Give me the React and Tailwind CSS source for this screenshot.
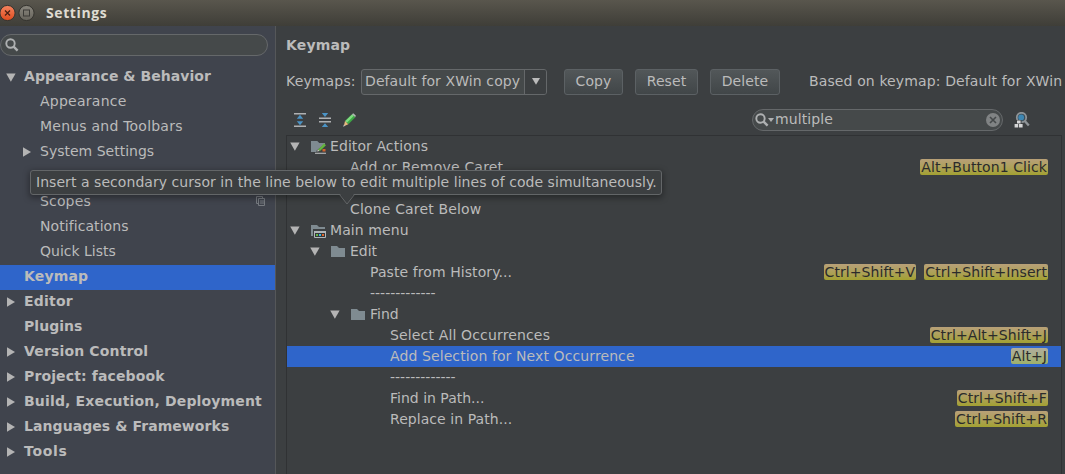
const Tri = ({ open }) =>
  open ? (
    <svg width="10" height="9" className="shrink-0" viewBox="0 0 10 9"><path d="M0.2 0.5h9.4L4.9 8.8z" fill="#b4b4b4" /></svg>
  ) : (
    <svg width="8" height="10" className="shrink-0" viewBox="0 0 8 10"><path d="M0 0.3v9.4L8 5z" fill="#b4b4b4" /></svg>
  );

const Magnifier = () => (
  <svg width="14" height="14" viewBox="0 0 14 14" className="shrink-0" fill="none" stroke="#aeb0b1">
    <circle cx="5.5" cy="5.5" r="4.2" strokeWidth="1.9" />
    <path d="M8.6 8.6l4 4" strokeWidth="2.4" />
  </svg>
);

const Folder = ({ kind }) => (
  <svg width="16" height="16" viewBox="0 0 16 16" className="shrink-0">
    <path d="M1 3h6l2 2h6v9H1z" fill="#7f8b91" />
    {kind === "edit" && (
      <g>
        <path d="M5 14l8-10h3v12H5z" fill="#3c3f41" />
        <path d="M1 14V3h6l2 2h6v1L6.5 12.5V14z" fill="#7f8b91" />
        <path d="M5 15.3h11" stroke="#afb1b3" strokeWidth="1.2" />
        <path d="M8 11.8L14 5.4 16 7.2 10 13z" fill="#62b53c" />
        <path d="M7 13.6l1-2 1.5 1.5z" fill="#d3d4c8" />
        <path d="M12.5 11h3v2.5h-3z" fill="#d0632c" />
      </g>
    )}
    {kind === "menu" && (
      <g>
        <path d="M3 7h13v9H3z" fill="#3c3f41" />
        <path d="M4.5 9.5h11v6h-11z" fill="#34373a" stroke="#afb5b9" />
        <path d="M4 9h12v2H4z" fill="#afb5b9" />
        <path d="M6 12h2v2H6z" fill="#62b543" />
        <path d="M9 12h2v2H9z" fill="#40b6e0" />
        <path d="M12 12h2v2h-2z" fill="#e0662c" />
      </g>
    )}
  </svg>
);

const nav = [
  { t: "Appearance & Behavior", top: true, open: true, track: "tracking-[0.05px]" },
  { t: "Appearance", track: "tracking-[0.25px]" },
  { t: "Menus and Toolbars", track: "tracking-[0.22px]" },
  { t: "System Settings", arrow: true },
  { t: "" },
  { t: "Scopes", copy: true, track: "tracking-[0.15px]" },
  { t: "Notifications", track: "tracking-[0.07px]" },
  { t: "Quick Lists" },
  { t: "Keymap", top: true, sel: true, track: "tracking-[0.15px]" },
  { t: "Editor", top: true, arrow: true, track: "tracking-[0.2px]" },
  { t: "Plugins", top: true, track: "tracking-[0.05px]" },
  { t: "Version Control", top: true, arrow: true, track: "tracking-[0.16px]" },
  { t: "Project: facebook", top: true, arrow: true, track: "tracking-[0.13px]" },
  { t: "Build, Execution, Deployment", top: true, arrow: true, track: "tracking-[0.16px]" },
  { t: "Languages & Frameworks", top: true, arrow: true, track: "tracking-[0.07px]" },
  { t: "Tools", top: true, arrow: true, track: "tracking-[0.7px]" },
];

const rows = [
  { t: "Editor Actions", pad: "pl-[3px]", folder: "edit", track: "tracking-[0.08px]" },
  { t: "Add or Remove Caret", pad: "pl-[63px]", keys: ["Alt+Button1 Click"], track: "tracking-[0.2px]" },
  { t: "", pad: "pl-[63px]" },
  { t: "Clone Caret Below", pad: "pl-[63px]", track: "tracking-[0.16px]" },
  { t: "Main menu", pad: "pl-[3px]", folder: "menu", track: "tracking-[0.1px]" },
  { t: "Edit", pad: "pl-[23px]", folder: "plain" },
  { t: "Paste from History...", pad: "pl-[83px]", keys: ["Ctrl+Shift+V", "Ctrl+Shift+Insert"], track: "tracking-[0.08px]" },
  { t: "-------------", pad: "pl-[83px]" },
  { t: "Find", pad: "pl-[43px]", folder: "plain" },
  { t: "Select All Occurrences", pad: "pl-[103px]", keys: ["Ctrl+Alt+Shift+J"], track: "tracking-[0.15px]" },
  { t: "Add Selection for Next Occurrence", pad: "pl-[103px]", keys: ["Alt+J"], sel: true, track: "tracking-[0.1px]" },
  { t: "-------------", pad: "pl-[103px]" },
  { t: "Find in Path...", pad: "pl-[103px]", keys: ["Ctrl+Shift+F"] },
  { t: "Replace in Path...", pad: "pl-[103px]", keys: ["Ctrl+Shift+R"], track: "tracking-[0.06px]" },
];

function TitleBar() {
  return (
    <header className="flex h-[26px] shrink-0 items-center bg-linear-to-b from-[#59564d] to-[#3f3e38] pb-px">
      <svg width="36" height="18" viewBox="0 0 36 18" className="shrink-0">
        <defs>
          <linearGradient id="close" x2="0" y2="1"><stop stopColor="#f58560" /><stop offset="1" stopColor="#df4b1d" /></linearGradient>
          <linearGradient id="max" x2="0" y2="1"><stop stopColor="#8a877e" /><stop offset="1" stopColor="#66635b" /></linearGradient>
        </defs>
        <circle cx="7.5" cy="9" r="7.6" fill="url(#close)" stroke="#34332e" />
        <path d="M5 6.5l5 5M10 6.5l-5 5" stroke="#4b2013" strokeWidth="1.3" />
        <circle cx="26.5" cy="9" r="7.6" fill="url(#max)" stroke="#34332e" />
        <rect x="23.5" y="6" width="6" height="6" fill="none" stroke="#3c3b37" />
      </svg>
      <h1 className="ml-[10px] font-['Open_Sans',sans-serif] text-[14px] font-bold tracking-[0.6px] text-[#dfdbd2]">Settings</h1>
    </header>
  );
}

function Sidebar() {
  return (
    <aside className="flex w-[276px] shrink-0 flex-col border-r border-[#555759] bg-[#40444d] pt-2">
      <div className="mb-[9px] flex h-[22px] w-[268px] shrink-0 items-center rounded-full border border-[#65686a] bg-[#45494a] pl-1">
        <Magnifier />
      </div>
      <nav>
        {nav.map((n, i) => (
          <div key={i} className={`flex h-[25px] items-center pb-[3px] ${n.top ? "pl-[6px] font-bold" : "pl-[22px]"} ${n.sel ? "bg-[#2f65ca]" : ""}`}>
            <span className={`flex w-[18px] shrink-0 pt-[2px] ${n.open ? "" : "pl-px"}`}>{(n.open || n.arrow) && <Tri open={n.open} />}</span>
            <span className={`grow ${n.track ?? ""}`}>{n.t}</span>
            {n.copy && (
              <svg width="10" height="10" viewBox="0 0 10 10" className="mr-[9px]" fill="none" stroke="#777b80">
                <path d="M2.5 7.5h-2v-7h6v2M2.5 2.5h6v7h-6zM4 5h4M4 7h4" />
              </svg>
            )}
          </div>
        ))}
      </nav>
    </aside>
  );
}

const Button = ({ children, w }) => (
  <button className={`h-[26px] rounded-[3px] border border-[#5c6164] bg-linear-to-b from-[#525759] to-[#414648] pb-[2px] tracking-[0.1px] ${w}`}>{children}</button>
);

function Toolbar() {
  return (
    <div className="flex h-[32px] items-center pl-[8px]">
      <svg width="12" height="14" viewBox="0 0 12 14" className="mt-[2px]">
        <path d="M0 .8h12M0 13.2h12" stroke="#afb1b3" strokeWidth="1.5" />
        <path d="M6 1.8l3.2 4H2.800zM6 12.2l3.200-4H2.800z" fill="#4a93c5" />
      </svg>
      <svg width="12" height="14" viewBox="0 0 12 14" className="mt-[2px] ml-[13px]">
        <path d="M0 5.300h12M0 8.700h12" stroke="#afb1b3" strokeWidth="1.5" />
        <path d="M2.800 0h6.400L6 4zM2.800 14h6.400l-3.200-3.800z" fill="#4a93c5" />
      </svg>
      <svg width="13" height="14" viewBox="0 0 13 14" className="mt-[2px] ml-3">
        <path d="M2 8L9 1.200 12.300 4.200 5.300 11.300z" fill="#3da845" />
        <path d="M2.200 8L9.300 1.200l1.600 1.500-7 7z" fill="#7fdc80" />
        <path d="M9 1.200l1.200-1 2.600 2.400-.5 1.600z" fill="#b3b8b5" />
        <path d="M2 8l3.300 3.300L.8 13.200z" fill="#e7b77c" />
        <path d="M0 13.800l1-2.400 1.400 1.400z" fill="#bcbdbd" />
      </svg>
      <div className="mt-px ml-[396px] flex h-[22px] w-[251px] items-center rounded-full border border-[#65686a] bg-[#45494a] pr-[2px] pl-[2px]">
        <Magnifier />
        <svg width="6" height="4" viewBox="0 0 6 4" className="-ml-px"><path d="M0 0h6L3 4z" fill="#b0b1b2" /></svg>
        <span className="ml-px grow pb-px tracking-[0.1px]">multiple</span>
        <svg width="14" height="14" viewBox="0 0 14 14">
          <circle cx="7" cy="7" r="7" fill="#808384" />
          <path d="M4 4l6 6M10 4l-6 6" stroke="#45494a" strokeWidth="1.6" />
        </svg>
      </div>
      <svg width="16" height="16" viewBox="0 0 16 16" className="mt-px ml-[11px]">
        <circle cx="7.5" cy="5.5" r="4.7" fill="#3d4e59" stroke="#8f9498" strokeWidth="1.8" />
        <circle cx="7.2" cy="5.5" r="2.9" fill="#3e87b3" />
        <path d="M10.8 9l4 4.5" stroke="#8f9498" strokeWidth="2.4" />
        <path d="M1.5 8h6v3H9v5H0v-5h1.5z" fill="#3c3f41" />
        <path d="M3 8.500h3.600v3H3zM0.600 12h3.600v3.600H.6zM5 12h3.600v3.600H5z" fill="#d5d6d7" />
      </svg>
    </div>
  );
}

function ActionTree() {
  return (
    <div className="w-[776px] grow border border-b-0 border-[#303234]">
      {rows.map((r, i) => (
        <div key={i} className={`flex h-[21px] items-center pr-[13px] ${r.pad} ${r.sel ? "bg-[#2f65ca]" : ""}`}>
          {r.folder && (
            <span className="flex w-[40px] shrink-0 items-center">
              <Tri open />
              <span className="ml-[10px] pb-px"><Folder kind={r.folder} /></span>
            </span>
          )}
          <span className={`grow pb-px ${r.track ?? ""}`}>{r.t}</span>
          <span className="flex gap-2 pb-px">
            {r.keys?.map((k) => (
              <kbd key={k} className={`flex h-[16px] items-center rounded-[2px] bg-linear-to-b px-px font-['DejaVu_Sans',sans-serif] tracking-[0.08px] text-[#2b2b2b] ${r.sel ? "from-[#b0ad9d] to-[#9fb06a]" : "from-[#b8a078] to-[#a3a130]"}`}>{k}</kbd>
            ))}
          </span>
        </div>
      ))}
    </div>
  );
}

export default function App() {
  return (
    <div className="relative flex h-[474px] w-[1065px] flex-col overflow-hidden bg-[#3c3f41] font-['DejaVu_Sans',sans-serif] text-[14px] leading-[18px] whitespace-nowrap text-[#bbbbbb]">
      <TitleBar />
      <div className="flex min-h-0 grow">
        <Sidebar />
        <main className="flex min-w-0 grow flex-col pl-[10px]">
          <h2 className="mt-[10px] h-[18px] font-bold tracking-[0.15px]">Keymap</h2>
          <div className="mt-[14px] mb-[8px] flex h-[27px] shrink-0 items-center">
            <span className="w-[75px] pb-[2px] tracking-[0.15px]">Keymaps:</span>
            <div className="flex h-[26px] w-[186px] shrink-0 items-center rounded-[3px] border border-[#65686a] bg-[#45494a]">
              <span className="w-[162px] pb-[2px] pl-[3px] tracking-[0.1px]">Default for XWin copy</span>
              <span className="flex h-full grow items-center justify-center rounded-r-[2px] border-l border-[#65686a] bg-[#3c3f41]">
                <svg width="8" height="7" viewBox="0 0 8 7"><path d="M0 0h8L4 6.8z" fill="#bbbbbb" /></svg>
              </span>
            </div>
            <div className="ml-[17px] flex shrink-0 gap-3">
              <Button w="w-[59px]">Copy</Button>
              <Button w="w-[63px]">Reset</Button>
              <Button w="w-[70px]">Delete</Button>
            </div>
            <span className="ml-[29px] pb-[2px] tracking-[0.12px]">Based on keymap: Default for XWin</span>
          </div>
          <Toolbar />
          <ActionTree />
        </main>
      </div>
      <div className="absolute top-[170px] left-[30px] flex h-[25px] w-[632px] items-center rounded-[3px] border border-[#636668] bg-[#3c3f41] pb-[2px] pl-[5px] tracking-[0.05px] shadow-[0_2px_6px_1px_rgba(0,0,0,0.35)]">
        Insert a secondary cursor in the line below to edit multiple lines of code simultaneously.
        <svg width="16" height="11" viewBox="0 0 16 11" className="absolute top-[23px] left-[308px]">
          <path d="M1 0L8 9.5 15 0z" fill="#3c3f41" />
          <path d="M0.5 .5L8 10 15.5 .5" fill="none" stroke="#636668" />
        </svg>
      </div>
    </div>
  );
}
